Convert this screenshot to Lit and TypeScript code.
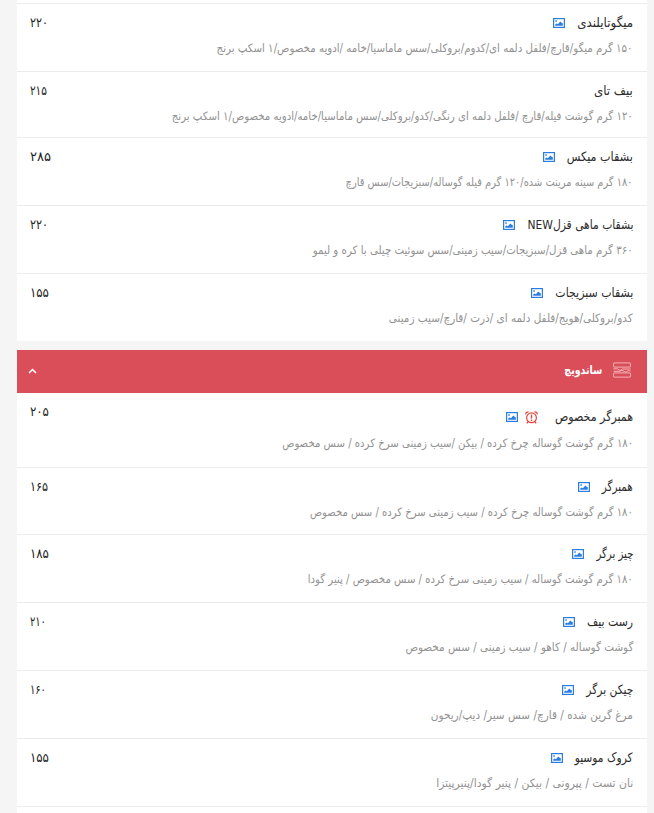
import { LitElement, html, css, svg, nothing } from "lit";
import { customElement, property } from "lit/decorators.js";

interface Dish {
  name: string;
  nameWidth: number;
  text: string;
  textWidth: number;
  price: string;
  priceWidth: number;
  height: number;
  photo?: boolean;
  timed?: boolean;
}

const plates: Dish[] = [
  { name: "میگوتایلندی", nameWidth: 56, text: "۱۵۰ گرم میگو/قارچ/فلفل دلمه ای/کدوم/بروکلی/سس ماماسیا/خامه /ادویه مخصوص/۱ اسکپ برنج", textWidth: 416, price: "۲۲۰", priceWidth: 18, height: 68, photo: true },
  { name: "بیف تای", nameWidth: 39, text: "۱۲۰ گرم گوشت فیله/قارچ /فلفل دلمه ای رنگی/کدو/بروکلی/سس ماماسیا/خامه/ادویه مخصوص/۱ اسکپ برنج", textWidth: 461, price: "۲۱۵", priceWidth: 17, height: 66 },
  { name: "بشقاب میکس", nameWidth: 66, text: "۱۸۰ گرم سینه مرینت شده/۱۲۰ گرم فیله گوساله/سبزیجات/سس قارچ", textWidth: 287, price: "۲۸۵", priceWidth: 21, height: 68, photo: true },
  { name: "بشقاب ماهی قزلNEW", nameWidth: 106, text: "۳۶۰ گرم ماهی قزل/سبزیجات/سیب زمینی/سس سوئیت چیلی با کره و لیمو", textWidth: 320, price: "۲۲۰", priceWidth: 18, height: 68, photo: true },
  { name: "بشقاب سبزیجات", nameWidth: 78, text: "کدو/بروکلی/هویج/فلفل دلمه ای /ذرت /قارچ/سیب زمینی", textWidth: 244, price: "۱۵۵", priceWidth: 19, height: 67, photo: true },
];

const sandwiches: Dish[] = [
  { name: "همبرگر مخصوص", nameWidth: 78, text: "۱۸۰ گرم گوشت گوساله چرخ کرده / بیکن /سیب زمینی سرخ کرده / سس مخصوص", textWidth: 351, price: "۲۰۵", priceWidth: 19, height: 75, photo: true, timed: true },
  { name: "همبرگر", nameWidth: 31, text: "۱۸۰ گرم گوشت گوساله چرخ کرده / سیب زمینی سرخ کرده / سس مخصوص", textWidth: 323, price: "۱۶۵", priceWidth: 18, height: 67, photo: true },
  { name: "چیز برگر", nameWidth: 37, text: "۱۸۰ گرم گوشت گوساله / سیب زمینی سرخ کرده / سس مخصوص / پنیر گودا", textWidth: 325, price: "۱۸۵", priceWidth: 19, height: 68, photo: true },
  { name: "رست بیف", nameWidth: 46, text: "گوشت گوساله / کاهو / سیب زمینی / سس مخصوص", textWidth: 228, price: "۲۱۰", priceWidth: 16, height: 68, photo: true },
  { name: "چیکن برگر", nameWidth: 47, text: "مرغ گرین شده / قارچ/ سس سیر/ دیپ/ریحون", textWidth: 202, price: "۱۶۰", priceWidth: 16, height: 68, photo: true },
  { name: "کروک موسیو", nameWidth: 58, text: "نان تست / پپرونی / بیکن / پنیر گودا/پنیرپیتزا", textWidth: 197, price: "۱۵۵", priceWidth: 19, height: 68, photo: true },
];

/** A single line of text whose glyphs are condensed to a given measure. */
@customElement("fit-text")
class FitText extends LitElement {
  static styles = css`
    :host { display: block; flex: none; white-space: nowrap; }
    .measure { display: flex; }
    .line { flex: none; transform-origin: right center; }
  `;
  @property() text = "";
  @property({ type: Number }) measure = 0;

  updated() {
    const line = this.renderRoot.querySelector(".line") as HTMLElement;
    line.style.transform = "none";
    line.style.transform = `scaleX(${this.measure / line.getBoundingClientRect().width})`;
  }

  render() {
    return html`<div class="measure" style="width:${this.measure}px"><span class="line">${this.text}</span></div>`;
  }
}

const photoIcon = svg`<svg class="photo" viewBox="0 0 12 10" width="12" height="10">
  <rect x=".6" y=".6" width="10.8" height="8.8" fill="none" stroke="currentColor" stroke-width="1.2"/>
  <rect x="2.3" y="2.3" width="1.5" height="1.5" fill="currentColor"/>
  <path d="M2.2 7.8V6.4L3.6 5.4 4.9 6.2 7.3 3.4 8.6 4.8 9.8 5.2V7.8Z" fill="currentColor"/>
</svg>`;

const alarmIcon = svg`<svg class="alarm" viewBox="0 0 13 13" width="13" height="13" fill="none" stroke="currentColor">
  <circle cx="6.5" cy="6.8" r="4.9" stroke-width="1.2"/>
  <path d="M.8 3.4Q.6 1 3.6.8M12.2 3.4Q12.4 1 9.4.8M3.1 10.6 1.8 12.4M9.9 10.6l1.3 1.8" stroke-width="1.3"/>
  <path d="M6.5 3.6v3.9M6.5 8.6v1.3" stroke-width="1.4"/>
</svg>`;

@customElement("dish-row")
class DishRow extends LitElement {
  static styles = css`
    :host { display: block; }
    .row {
      box-sizing: border-box;
      display: flex;
      justify-content: space-between;
      align-items: flex-start;
      padding: 8px 14px 0 13px;
      border-bottom: 1px solid #ececec;
    }
    :host(.last) .row { border-bottom-color: transparent; }
    .head { display: flex; align-items: center; height: 22px; font-size: 13px; line-height: 22px; color: #2b2b2b; }
    .icons { display: flex; align-items: center; gap: 7px; margin-right: 12px; }
    .photo { display: block; color: #2b7de1; }
    .alarm { display: block; color: #e0493f; }
    .text { display: flex; margin-top: 4px; font-size: 11.5px; line-height: 20px; color: #929292; }
    .price { font-size: 13px; line-height: 22px; color: #222; }
    .timed { padding-top: 13px; }
    .timed .price { margin-top: -5px; }
    .timed .icons { margin-right: 17px; }
    .timed .text { margin-top: 5px; }
  `;
  @property({ attribute: false }) dish!: Dish;

  render() {
    const d = this.dish;
    return html`<div class="row ${d.timed ? "timed" : ""}" style="height:${d.height}px">
      <div>
        <div class="head">
          <fit-text .text=${d.name} .measure=${d.nameWidth}></fit-text>
          <div class="icons">${d.timed ? alarmIcon : nothing}${d.photo ? photoIcon : nothing}</div>
        </div>
        <div class="text"><fit-text .text=${d.text} .measure=${d.textWidth}></fit-text></div>
      </div>
      <fit-text class="price" .text=${d.price} .measure=${d.priceWidth}></fit-text>
    </div>`;
  }
}

@customElement("app-root")
class AppRoot extends LitElement {
  static styles = css`
    :host {
      display: block;
      box-sizing: border-box;
      height: 813px;
      overflow: hidden;
      padding: 0 7px 0 17px;
      background: #f5f5f5;
      direction: rtl;
      font-family: "DejaVu Sans", sans-serif;
    }
    .list { background: #fff; }
    .edge { box-sizing: border-box; height: 4px; border-bottom: 1px solid #ececec; }
    .bar {
      display: flex;
      align-items: center;
      box-sizing: border-box;
      height: 43px;
      margin-top: 9px;
      padding: 0 16px 3px;
      background: #d94e59;
      color: #fff;
      font-size: 11.5px;
      font-weight: bold;
    }
    .dishes { display: block; margin-left: 11px; color: #f3b3b3; }
    .arrow { display: block; margin: 2px auto 0 -5px; }
    .tail { height: 10px; }
  `;

  render() {
    return html`
      <div class="list">
        <div class="edge"></div>
        ${plates.map((d, i) => html`<dish-row class=${i === plates.length - 1 ? "last" : ""} .dish=${d}></dish-row>`)}
      </div>
      <div class="bar">
        <svg class="dishes" viewBox="0 0 18 16" width="18" height="16" fill="none" stroke="currentColor">
          <rect x=".5" y=".9" width="17" height="4.2" rx=".5"/>
          <rect x=".5" y="10.9" width="17" height="4.2" rx=".5"/>
          <path d="M.5 6.8H4.5L7 8.6 9.5 7H17.5M.5 9.3H7L9 8.2 12.5 10.2 15 8.8H17.5"/>
        </svg>
        <fit-text text="ساندویچ" measure="38"></fit-text>
        <svg class="arrow" viewBox="0 0 9 6" width="9" height="6" fill="none" stroke="#fff" stroke-width="1.5"><path d="M1 5 4.5 1.5 8 5"/></svg>
      </div>
      <div class="list">
        ${sandwiches.map((d) => html`<dish-row .dish=${d}></dish-row>`)}
        <div class="tail"></div>
      </div>
    `;
  }
}
